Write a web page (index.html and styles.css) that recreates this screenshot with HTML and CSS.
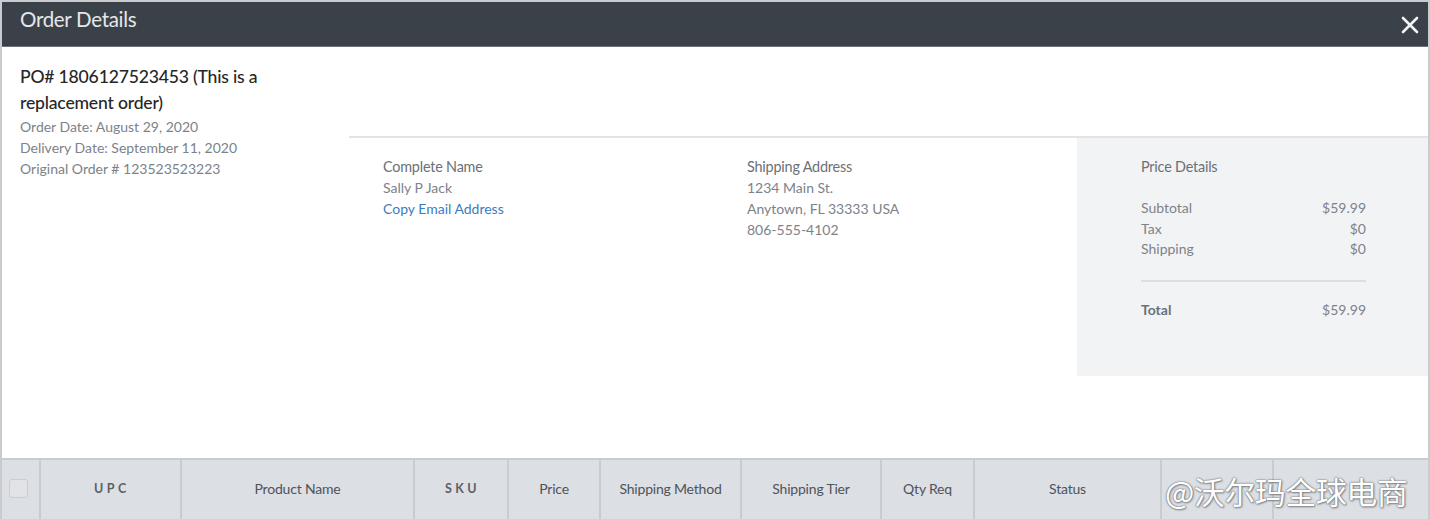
FILE: index.html
```html
<!DOCTYPE html>
<html lang="en">
<head>
<meta charset="utf-8">
<title>Order Details</title>
<link rel="stylesheet" href="styles.css">
</head>
<body>
<div class="modal">
  <div class="modal-header">
    <h1 class="modal-title">Order Details</h1>
    <button class="close-btn" aria-label="Close">
      <svg width="18" height="18" viewBox="0 0 18 18"><path d="M2 2 L16 16 M16 2 L2 16" stroke="#f2f3f4" stroke-width="2.6" stroke-linecap="round"/></svg>
    </button>
  </div>
  <div class="modal-body">
    <div class="summary">
      <div class="order-info">
        <div class="po">PO# 1806127523453 (This is a replacement order)</div>
        <div class="meta">Order Date: August 29, 2020</div>
        <div class="meta">Delivery Date: September 11, 2020</div>
        <div class="meta">Original Order # 123523523223</div>
      </div>
      <div class="details">
        <div class="details-top"></div>
        <div class="details-row">
          <div class="col col-name">
            <div class="label">Complete Name</div>
            <div class="value">Sally P Jack</div>
            <a class="link" href="#">Copy Email Address</a>
          </div>
          <div class="col col-address">
            <div class="label">Shipping Address</div>
            <div class="value">1234 Main St.</div>
            <div class="value">Anytown, FL 33333 USA</div>
            <div class="value">806-555-4102</div>
          </div>
          <div class="price-panel">
            <div class="label">Price Details</div>
            <div class="price-lines">
              <div class="price-line"><span>Subtotal</span><span>$59.99</span></div>
              <div class="price-line"><span>Tax</span><span>$0</span></div>
              <div class="price-line"><span>Shipping</span><span>$0</span></div>
            </div>
            <div class="price-total"><span>Total</span><span>$59.99</span></div>
          </div>
        </div>
      </div>
    </div>
    <div class="table-head">
      <div class="th th-check"><span class="checkbox"></span></div>
      <div class="th spaced">UPC</div>
      <div class="th">Product Name</div>
      <div class="th spaced">SKU</div>
      <div class="th">Price</div>
      <div class="th">Shipping Method</div>
      <div class="th">Shipping Tier</div>
      <div class="th">Qty Req</div>
      <div class="th">Status</div>
      <div class="th"></div>
      <div class="th"></div>
    </div>
  </div>
  <div class="watermark">@沃尔玛全球电商</div>
</div>
</body>
</html>
```
FILE: styles.css
```css
* { box-sizing: border-box; }
html, body { margin: 0; padding: 0; background: #ffffff; }
body {
  font-family: Lato, "Open Sans", "Liberation Sans", sans-serif;
  width: 1430px;
  height: 519px;
  overflow: hidden;
}
.modal {
  position: relative;
  width: 1430px;
  height: 540px;
  border: 2px solid #c9cbce;
  border-bottom: none;
  background: #fff;
}
.modal-header {
  height: 45px;
  background: #3b4149;
  border-bottom: 1px solid #6f7379;
  display: flex;
  align-items: center;
  justify-content: space-between;
  padding: 0 7px 0 18px;
}
.modal-title {
  margin: 0;
  font-weight: 400;
  font-size: 20.5px;
  color: #e6e7e8;
  letter-spacing: -0.3px;
  position: relative;
  top: -5px;
}
.close-btn {
  background: none;
  border: none;
  padding: 0;
  width: 22px;
  height: 22px;
  display: flex;
  align-items: center;
  justify-content: center;
  position: relative;
  top: 1px;
}
.modal-body {
  display: flex;
  flex-direction: column;
}
.summary {
  display: flex;
  height: 411px;
}
.order-info {
  width: 347px;
  padding: 17px 0 0 18px;
}
.po {
  width: 270px;
  font-size: 17.6px;
  line-height: 26px;
  color: #262626;
  font-weight: 500;
  letter-spacing: -0.2px;
}
.meta {
  font-size: 14px;
  line-height: 21px;
  color: #7d8289;
}
.meta:first-of-type { margin-top: -1px; }
.details {
  flex: 1;
  display: flex;
  flex-direction: column;
}
.details-top {
  height: 91px;
  border-bottom: 2px solid #e1e3e7;
}
.details-row {
  display: flex;
}
.col {
  padding: 18px 0 0 34px;
  font-size: 14px;
  line-height: 21px;
}
.col-name { width: 364px; }
.col-address { width: 364px; }
.label {
  color: #6c7179;
  font-size: 14.4px;
  letter-spacing: -0.2px;
}
.value { color: #7d8289; }
.link {
  display: block;
  color: #3a7dc0;
  text-decoration: none;
}
.price-panel {
  flex: 1;
  height: 238px;
  background: #f2f3f5;
  padding: 18px 62px 0 64px;
  font-size: 14px;
  line-height: 21px;
  color: #7d8289;
}
.price-lines {
  margin-top: 21px;
  padding-bottom: 20px;
  border-bottom: 2px solid #dcdee2;
}
.price-line {
  display: flex;
  justify-content: space-between;
  line-height: 20.5px;
}
.price-total {
  display: flex;
  justify-content: space-between;
  margin-top: 17px;
  color: #6c7179;
  font-weight: 700;
}
.price-total span:last-child { font-weight: 400; color: #7d8289; }
.table-head {
  display: grid;
  grid-template-columns: 39px 141px 233px 94px 92px 141px 140px 93px 187px 112px 1fr;
  height: 64px;
  background: #dcdfe3;
  border-top: 2px solid #c8cbcf;
}
.th {
  display: flex;
  align-items: center;
  justify-content: center;
  border-right: 2px solid #c8cbcf;
  font-size: 14px;
  color: #4f535a;
  letter-spacing: -0.2px;
  padding-bottom: 5px;
}
.th:last-child { border-right: none; }
.th.spaced { letter-spacing: 3.5px; font-weight: 700; font-size: 12.5px; color: #5c6066; padding-left: 3px; }
.th-check { justify-content: flex-start; padding-left: 7px; }
.checkbox {
  width: 19px;
  height: 19px;
  border: 1.5px solid #c9ccd0;
  border-radius: 3px;
  background: #e1e3e6;
}
.watermark {
  position: absolute;
  left: 1163px;
  top: 469px;
  font-family: "Noto Sans CJK SC", sans-serif;
  font-size: 31px;
  line-height: 40px;
  color: #ffffff;
  letter-spacing: -0.5px;
  text-shadow: 0 0 2px #6c6f73, 0 0 1px #6c6f73, 1px 1px 2px #8a8d91;
}
```
